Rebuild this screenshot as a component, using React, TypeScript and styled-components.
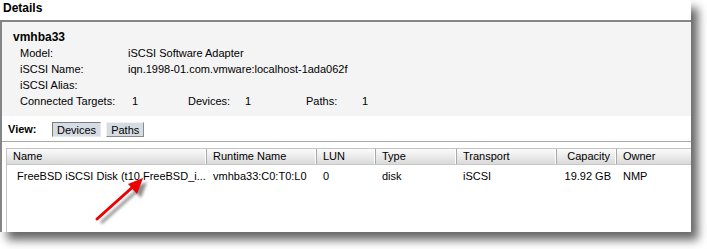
import React from 'react';
import styled, { createGlobalStyle } from 'styled-components';

const GlobalStyle = createGlobalStyle`
  html, body {
    margin: 0;
    padding: 0;
    background: #ffffff;
  }
  body {
    font-family: 'Liberation Sans', Arial, sans-serif;
    font-size: 11px;
    color: #000000;
  }
  #root {
    padding-bottom: 20px;
  }
`;

const Frame = styled.div`
  position: relative;
  width: 691px;
  height: 232px;
  background: #ffffff;
  box-shadow: 7px 8px 9px rgba(0, 0, 0, 0.6);
  overflow: hidden;
`;

const Title = styled.div`
  height: 20px;
  padding-left: 3px;
  font-weight: bold;
  font-size: 12px;
  line-height: 17px;
`;

const Body = styled.div`
  border-top: 2px solid #858585;
  border-left: 2px solid #858585;
  height: 210px;
  display: flex;
  flex-direction: column;
`;

const Summary = styled.div`
  background: #f4f4f4;
  height: 94px;
  padding: 7px 0 0 11px;
  box-sizing: border-box;
`;

const AdapterName = styled.div`
  font-weight: bold;
  font-size: 12px;
  line-height: 16px;
`;

const Props = styled.div`
  padding-left: 7px;
  display: grid;
  grid-template-columns: 108px 1fr;
  line-height: 16px;
`;

const CountRow = styled.div`
  grid-column: 1 / 3;
  display: flex;
`;

const Cell = styled.span<{ $w?: number }>`
  width: ${(p) => (p.$w ? `${p.$w}px` : 'auto')};
  padding-left: ${(p) => (p.$w === 58 ? '2px' : '0')};
  box-sizing: border-box;
`;

const ViewBar = styled.div`
  height: 26px;
  display: flex;
  align-items: center;
  gap: 5px;
  padding: 1px 0 0 6px;
  box-sizing: border-box;
  border-bottom: 1px solid #a9a9a9;
`;

const ViewLabel = styled.span`
  font-weight: bold;
  width: 39px;
`;

const ViewButton = styled.span<{ $active?: boolean }>`
  height: 15px;
  line-height: 14px;
  padding: 0 4px;
  box-sizing: border-box;
  background: #d6dce4;
  border: 1px solid;
  border-color: ${(p) =>
    p.$active ? '#7d7d7d #e8e8e8 #e8e8e8 #7d7d7d' : '#f2f2f2 #8a8a8a #8a8a8a #f2f2f2'};
`;

const TableWrap = styled.div`
  flex: 1;
  padding: 6px 0 0 4px;
`;

const Table = styled.div`
  height: 100%;
  border-top: 1px solid #c4c4c4;
  border-left: 1px solid #c4c4c4;
  background: #ffffff;
`;

const cols = '200px 110px 59px 81px 100px 60px 1fr';

const HeaderRow = styled.div`
  display: grid;
  grid-template-columns: ${cols};
  height: 15px;
  background: linear-gradient(#fbfbfb, #e4e4e4 70%, #d9d9d9);
  border-bottom: 1px solid #c8c8c8;
`;

const HeaderCell = styled.div<{ $right?: boolean; $last?: boolean }>`
  line-height: 15px;
  padding: 0 6px;
  text-align: ${(p) => (p.$right ? 'right' : 'left')};
  border-right: ${(p) => (p.$last ? 'none' : '1px solid #a8a8a8')};
  box-shadow: ${(p) => (p.$last ? 'none' : 'inset -1px 0 0 #ffffff')};
  white-space: nowrap;
  overflow: hidden;
`;

const DataRow = styled.div`
  display: grid;
  grid-template-columns: ${cols};
  height: 20px;
  margin-top: 1px;
`;

const DataCell = styled.div<{ $right?: boolean; $indent?: number }>`
  line-height: 20px;
  padding: 0 6px 0 ${(p) => p.$indent ?? 6}px;
  text-align: ${(p) => (p.$right ? 'right' : 'left')};
  white-space: nowrap;
  overflow: hidden;
`;

const Arrow = styled.svg`
  position: absolute;
  left: 80px;
  top: 170px;
  overflow: visible;
`;

const App = () => {
  return (
    <>
      <GlobalStyle />
      <Frame>
        <Title>Details</Title>
        <Body>
          <Summary>
            <AdapterName>vmhba33</AdapterName>
            <Props>
              <span>Model:</span>
              <span>iSCSI Software Adapter</span>
              <span>iSCSI Name:</span>
              <span>iqn.1998-01.com.vmware:localhost-1ada062f</span>
              <span>iSCSI Alias:</span>
              <span></span>
              <CountRow>
                <Cell $w={110}>Connected Targets:</Cell>
                <Cell $w={58}>1</Cell>
                <Cell $w={57}>Devices:</Cell>
                <Cell $w={59}>1</Cell>
                <Cell $w={58}>Paths:</Cell>
                <Cell>1</Cell>
              </CountRow>
            </Props>
          </Summary>
          <ViewBar>
            <ViewLabel>View:</ViewLabel>
            <ViewButton $active>Devices</ViewButton>
            <ViewButton>Paths</ViewButton>
          </ViewBar>
          <TableWrap>
            <Table>
              <HeaderRow>
                <HeaderCell>Name</HeaderCell>
                <HeaderCell>Runtime Name</HeaderCell>
                <HeaderCell>LUN</HeaderCell>
                <HeaderCell>Type</HeaderCell>
                <HeaderCell>Transport</HeaderCell>
                <HeaderCell $right>Capacity</HeaderCell>
                <HeaderCell $last>Owner</HeaderCell>
              </HeaderRow>
              <DataRow>
                <DataCell $indent={10}>FreeBSD iSCSI Disk (t10.FreeBSD_i...</DataCell>
                <DataCell>vmhba33:C0:T0:L0</DataCell>
                <DataCell>0</DataCell>
                <DataCell>disk</DataCell>
                <DataCell>iSCSI</DataCell>
                <DataCell $right>19.92 GB</DataCell>
                <DataCell>NMP</DataCell>
              </DataRow>
            </Table>
          </TableWrap>
        </Body>
        <Arrow width="80" height="60" viewBox="0 0 80 60">
          <defs>
            <filter id="blur" x="-20%" y="-20%" width="140%" height="140%">
              <feGaussianBlur stdDeviation="1.6" />
            </filter>
          </defs>
          <g transform="translate(4 4)" filter="url(#blur)" opacity="0.45">
            <line x1="17" y1="49" x2="55" y2="15" stroke="#000" strokeWidth="3" />
            <polygon points="63,8 48,14 57,24" fill="#000" />
          </g>
          <line x1="17" y1="49" x2="55" y2="15" stroke="#ee0000" strokeWidth="3" strokeLinecap="round" />
          <polygon points="63,8 48,14 57,24" fill="#ee0000" />
        </Arrow>
      </Frame>
    </>
  );
};

export default App;
